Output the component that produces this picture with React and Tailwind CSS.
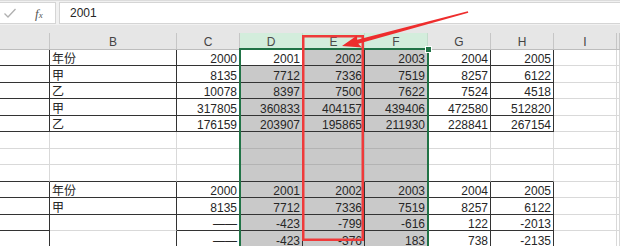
import React from "react";

const widths = ["w-[50px]", "w-[127px]", "w-[63px]", "w-[63px]", "w-[62px]", "w-[63px]", "w-[63px]", "w-[63px]", "w-[63px]", "w-[3px]"];
const headers = ["", "B", "C", "D", "E", "F", "G", "H", "I", ""];
const heights = ["h-[16px]", "h-[17px]"];

const rows = [
  ["", "年份", "2000", "2001", "2002", "2003", "2004", "2005"],
  ["", "甲", "8135", "7712", "7336", "7519", "8257", "6122"],
  ["", "乙", "10078", "8397", "7500", "7622", "7524", "4518"],
  ["", "甲", "317805", "360833", "404157", "439406", "472580", "512820"],
  ["", "乙", "176159", "203907", "195865", "211930", "228841", "267154"],
  [],
  [],
  [],
  ["", "年份", "2000", "2001", "2002", "2003", "2004", "2005"],
  ["", "甲", "8135", "7712", "7336", "7519", "8257", "6122"],
  ["", "", "——", "-423", "-799", "-616", "122", "-2013"],
  ["", "", "——", "-423", "-376", "183", "738", "-2135"],
];

const isDark = (r, c) => c <= 7 && r < 12 && (r <= 4 || r >= 8) && !(r >= 10 && c === 1);
const isSel = (r, c) => c >= 3 && c <= 5 && !(r === 0 && c === 3);

function Cell({ r, c }) {
  const v = (rows[r] && rows[r][c]) || "";
  const sel = isSel(r, c);
  const rd = isDark(r, c) || isDark(r, c + 1);
  const bd = isDark(r, c) || isDark(r + 1, c);
  const light = sel ? "#b3b3b3" : "#d9d9d9";
  const left = c === 1;
  return (
    <div
      className={[
        widths[c],
        "shrink-0 h-full border-r border-b flex items-end overflow-hidden whitespace-nowrap text-[12px] leading-[12px] text-[#262626]",
        left ? "justify-start pl-[2px]" : "justify-end pr-[2px]",
        sel ? "bg-[#c9c9c9]" : "bg-white",
        rd ? "border-r-[#333333]" : sel ? "border-r-[#b3b3b3]" : "border-r-[#d9d9d9]",
        bd ? "border-b-[#333333]" : sel ? "border-b-[#b3b3b3]" : "border-b-[#d9d9d9]",
      ].join(" ")}
      data-light={light}
    >
      {v}
    </div>
  );
}

export default function App() {
  return (
    <div className="relative w-[620px] h-[246px] overflow-hidden bg-white font-['Liberation_Sans','Noto_Sans_CJK_SC',sans-serif]">
      {/* formula bar */}
      <div className="h-[25px] bg-[#f1f1f1] flex pt-[1px] pb-[1px] border-t border-[#dcdcdc]">
        <div className="w-[56px] bg-white border border-l-0 border-[#d5d5d5] flex items-center">
          <svg width="14" height="12" viewBox="0 0 14 12" className="ml-[3px]">
            <path d="M1.5 6.5 L5 10 L12.5 2" fill="none" stroke="#b0b0b0" strokeWidth="1.3" />
          </svg>
          <span className="ml-[18px] font-['Liberation_Serif',serif] italic text-[13px] leading-none text-[#555]">
            f<span className="text-[9px]">x</span>
          </span>
        </div>
        <div className="ml-[3px] flex-1 bg-white border border-r-0 border-[#d5d5d5] flex items-center pl-[10px] text-[12px] text-[#262626]">
          2001
        </div>
      </div>
      <div className="h-[8px] bg-[#e6e6e6]" />
      {/* column headers */}
      <div className="flex h-[16px] bg-[#e6e6e6]">
        {headers.map((h, c) => {
          const sel = c >= 3 && c <= 5;
          return (
            <div
              key={c}
              className={[
                widths[c],
                "shrink-0 h-full border-r flex items-end justify-center pb-[1px] text-[12px] leading-[12px]",
                sel ? "bg-[#d3eddc] text-[#4a4a4a] border-r-[#c3dccc]" : "text-[#444] border-r-[#c6c6c6]",
              ].join(" ")}
            >
              {h}
            </div>
          );
        })}
      </div>
      <div className="flex h-[1px]">
        <div className="w-[239px] bg-[#bdbdbd]" />
        <div className="w-[190px] bg-[#217346]" />
        <div className="flex-1 bg-[#bdbdbd]" />
      </div>
      {/* rows */}
      {rows.map((_, r) => (
        <div key={r} className={["flex", heights[r % 2]].join(" ")}>
          {widths.map((w, c) => (
            <Cell key={c} r={r} c={c} />
          ))}
        </div>
      ))}

      {/* selection border */}
      <div className="absolute left-[239px] top-[48px] w-[190px] h-[200px] border-x-2 border-t-2 border-[#217346] pointer-events-none" />
      <div className="absolute left-[426px] top-[47px] w-[5px] h-[5px] bg-[#217346] outline outline-1 outline-white" />

      {/* annotation */}
      <svg className="absolute left-0 top-0 pointer-events-none" width="620" height="246" viewBox="0 0 620 246">
        <rect x="303.25" y="36.25" width="59.5" height="203.5" fill="none" stroke="#ef3a3a" strokeWidth="2.5" />
        <polygon
          points="342,46 357,35.5 357.2,39.8 467.8,11.3 468.3,12.7 358.2,43.8 362,47.6"
          fill="#ee2d2d"
        />
      </svg>
    </div>
  );
}
